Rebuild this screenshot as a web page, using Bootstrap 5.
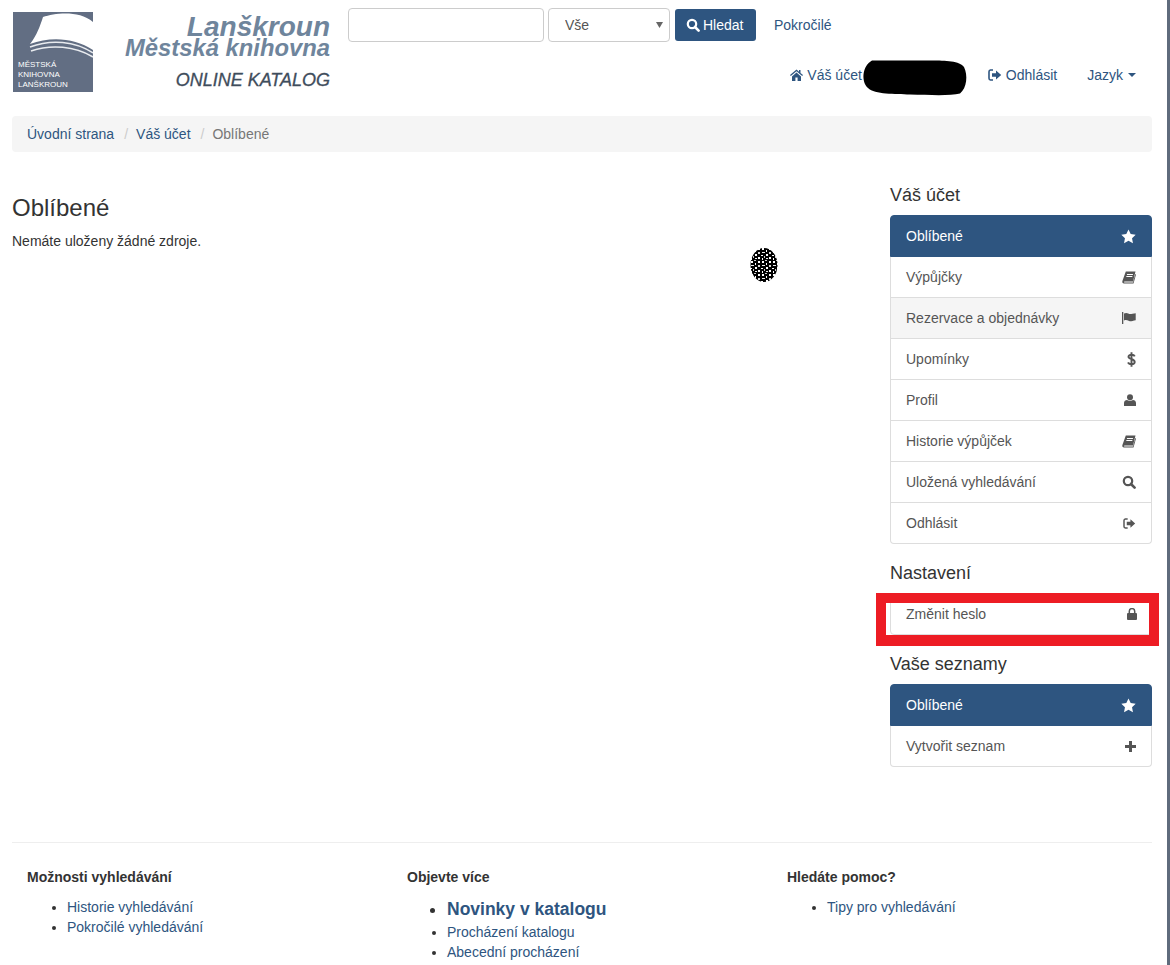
<!DOCTYPE html>
<html lang="cs">
<head>
<meta charset="utf-8">
<title>Oblíbené</title>
<link href="https://cdn.jsdelivr.net/npm/bootstrap@5.3.0/dist/css/bootstrap.min.css" rel="stylesheet">
<style>
html,body{height:965px;overflow:hidden}
body{position:relative;font:14px/20px "Liberation Sans",Arial,sans-serif;color:#333;background:#fff;border-right:3px solid #5f6b7c;width:1170px}
a{color:#2e5580;text-decoration:none}
.page-shell{padding:0 15px 0 12px;width:1167px}
.top-head{height:116px}
.logo-box{width:80px;height:80px;margin:12px 0 0 1px;flex:none}
.brand-box{width:237px;text-align:right;font-style:italic;font-weight:700;color:#6f859c;margin-top:15px}
.brand-a{font-size:28px;line-height:24px}
.brand-b{font-size:23.8px;line-height:18px}
.brand-c{font-size:18px;line-height:20px;color:#3f4d5c;margin-top:13px;font-weight:400;-webkit-text-stroke:.3px #3f4d5c}
.head-right{margin-left:18px;width:804px}
.search-row{margin-top:8px;height:34px}
.q-input{width:196px;height:34px;border:1px solid #ccc;border-radius:4px;margin-right:4px;padding:6px 12px;background:#fff}
.q-select.form-select{width:122px;height:34px;border:1px solid #ccc;border-radius:4px;margin-right:5px;padding:0 12px 0 16px;font-size:14px;color:#555;background-color:#fff;background-image:url("data:image/svg+xml,%3Csvg xmlns='http://www.w3.org/2000/svg' viewBox='0 0 7 6'%3E%3Cpath d='M0 0h7L3.500 6z' fill='%23666'/%3E%3C/svg%3E");background-position:right 6px center;background-size:7px 6px;font-family:inherit;line-height:32px}
.q-btn{height:32px;width:81px;padding:0 0 0 11px;background:#2e5580;border:0;border-radius:3px;color:#fff;font-size:14px;line-height:32px;display:flex;align-items:center;gap:3px}
.q-btn:hover{background:#2e5580;color:#fff}
.adv-link{margin-left:18px}
.user-row{margin-top:23px;height:20px;padding-right:16px;gap:0}
.user-row a{display:flex;align-items:center;gap:4px}
.user-gap{width:126px}
.lang-gap{margin-left:30px}
.caret-mark{display:inline-block;border-top:4px solid #2e5580;border-left:4.500px solid transparent;border-right:4.500px solid transparent;margin-left:1px}
.crumbs{background:#f5f5f5;border-radius:4px;height:36px;padding:8px 15px;margin:0}
.crumbs .breadcrumb-item{font-size:14px;line-height:20px}
.crumbs .breadcrumb-item+.breadcrumb-item{padding-left:6px}
.crumbs .breadcrumb-item+.breadcrumb-item::before{color:#ccc;padding-right:8px;content:"/";float:none;padding-left:4px}
.crumbs .breadcrumb-item.active{color:#777}
.main-row{height:691px}
.main-col{width:878px;padding-top:42px}
.main-title{font-size:24px;line-height:28px;font-weight:400;color:#333;margin:0 0 9px}
.side-col{width:262px;padding-top:33px}
.side-title{font-size:18px;line-height:20px;font-weight:400;color:#333;margin:0 0 10px}
.side-list{margin-bottom:19px;border-radius:4px}
.side-list .list-group-item{display:flex;justify-content:space-between;align-items:center;padding:10px 15px;height:41px;border-color:#ddd;color:#555;font-size:14px;line-height:20px}
.side-list .list-group-item:first-child{height:42px}
.side-list .list-group-item.active{background:#2e5580;border-color:#2e5580;color:#fff;font-weight:400}
.side-list .list-group-item.hl-row{background:#f5f5f5}
.side-list .list-group-item+.list-group-item{margin-top:0;border-top-width:0}
.ico-lock{margin-right:-1px}
.foot-zone{border-top:1px solid #eee;margin-top:-1px;padding-top:24px}
.foot-cell{width:380px;padding:0 15px}
.foot-title{font-size:14px;line-height:20px;font-weight:700;margin:0 0 10px;color:#333}
.foot-list{padding-left:40px;margin:0;list-style:disc}
.foot-big{font-size:17.500px;font-weight:700;line-height:25px}
.red-frame{position:absolute;left:876px;top:593px;width:283px;height:53px;border:solid #ed1c24;border-width:10px 10px 11px 10px;pointer-events:none}
.ink-blob{position:absolute;left:860px;top:58px}
.dot-blob{position:absolute;left:750px;top:247px}
.edge-nick{position:absolute;left:1167px;top:607px;width:1px;height:89px;background:#fff}
.ico{flex:none;display:block}
</style>
</head>
<body>
<div class="page-shell">
  <header class="top-head d-flex">
    <svg class="logo-box" viewBox="0 0 80 80" aria-label="Městská knihovna Lanškroun">
      <rect width="80" height="80" fill="#626e83"/>
      <path d="M30 5C42 1 66-2 80 10V38C62 26 38 24 17 32C24 23 27 14 30 5Z" fill="#fff"/>
      <path d="M17 35C38 27 62 29 80 41M18 39C38 32 62 34 80 45" fill="none" stroke="#e8ebef" stroke-width="1.500"/>
      <text x="5" y="55" font-size="8" fill="#fff" font-family="Liberation Sans">MĚSTSKÁ</text>
      <text x="5" y="65" font-size="8" fill="#fff" font-family="Liberation Sans">KNIHOVNA</text>
      <text x="5" y="75" font-size="8" fill="#fff" font-family="Liberation Sans">LANŠKROUN</text>
    </svg>
    <div class="brand-box">
      <div class="brand-a">Lanškroun</div>
      <div class="brand-b">Městská knihovna</div>
      <div class="brand-c">ONLINE KATALOG</div>
    </div>
    <div class="head-right">
      <form class="search-row d-flex align-items-center">
        <input class="q-input" type="text" aria-label="Hledat">
        <select class="q-select form-select" aria-label="Typ"><option>Vše</option></select>
        <button class="q-btn btn" type="button">
          <svg class="ico" width="14" height="14" viewBox="0 0 14 14"><circle cx="6" cy="6" r="4.200" fill="none" stroke="#fff" stroke-width="2.200"/><path d="M9 9l3.600 3.600" stroke="#fff" stroke-width="2.600" stroke-linecap="round"/></svg>
          Hledat
        </button>
        <a class="adv-link" href="#">Pokročilé</a>
      </form>
      <nav class="user-row d-flex justify-content-end align-items-center">
        <a href="#"><svg class="ico" width="13" height="12" viewBox="0 0 13 12"><path d="M6.500 0.500L0 6l.8 1L6.500 2.300 12.200 7l.8-1L10.500 4V1H9v1.700zM2 7.500V12h3.400V8.500h2.200V12H11V7.500L6.500 3.600z" fill="#2e5580"/></svg>Váš účet</a>
        <span class="user-gap"></span>
        <a href="#"><svg class="ico" width="14" height="12" viewBox="0 0 14 12"><path d="M5 1H2.500A1.700 1.700 0 0 0 1 2.700v6.600A1.700 1.700 0 0 0 2.500 11H5" fill="none" stroke="#2e5580" stroke-width="1.600"/><path d="M4 4.200h4V1.400L13.200 6 8 10.600V7.800H4z" fill="#2e5580"/></svg>Odhlásit</a>
        <a class="lang-gap" href="#">Jazyk <span class="caret-mark"></span></a>
      </nav>
    </div>
  </header>

  <nav aria-label="breadcrumb">
    <ol class="breadcrumb crumbs">
      <li class="breadcrumb-item"><a href="#">Úvodní strana</a></li>
      <li class="breadcrumb-item"><a href="#">Váš účet</a></li>
      <li class="breadcrumb-item active" aria-current="page">Oblíbené</li>
    </ol>
  </nav>

  <div class="main-row d-flex">
    <main class="main-col">
      <h2 class="main-title">Oblíbené</h2>
      <p class="m-0">Nemáte uloženy žádné zdroje.</p>
    </main>
    <aside class="side-col">
      <h4 class="side-title">Váš účet</h4>
      <div class="list-group side-list">
        <a class="list-group-item active" href="#">Oblíbené <svg class="ico" width="15" height="15" viewBox="0 0 14 14"><path d="M7 .4l2.050 4.300 4.650.6-3.400 3.250.87 4.650L7 10.950l-4.170 2.250.87-4.650L.3 5.300l4.650-.6z" fill="#fff"/></svg></a>
        <a class="list-group-item" href="#">Výpůjčky <svg class="ico" width="14" height="13" viewBox="0 0 14 13"><path d="M3.800 .5H13.500L11 10.500H2.800C1.600 10.500 1.500 11.500 2.600 11.500H11l2.300-8.500.7.500L11.500 12.500H2C.6 12.500 0 11.300.4 10zM5.100 3l-.3 1h6l.3-1zM4.500 5l-.3 1h6l.3-1z" fill="#555" fill-rule="evenodd"/></svg></a>
        <a class="list-group-item hl-row" href="#">Rezervace a objednávky <svg class="ico" width="14" height="12" viewBox="0 0 14 12"><rect width="1.300" height="12" fill="#555"/><path d="M2 1.500c3-1.600 4.500.6 6 .6s3.500-.6 5.700-.9v7c-2.500.5-3.800 1-5.700 1s-3-2-6-.6z" fill="#555"/></svg></a>
        <a class="list-group-item" href="#">Upomínky <svg class="ico" width="9" height="15" viewBox="0 0 8 14"><path d="M7 4C6.600 3 5.500 2.600 4 2.600 2.400 2.600 1.200 3.200 1.200 4.400c0 2.800 5.800 1.400 5.800 5 0 1.300-1.300 2-3 2-1.600 0-2.800-.6-3.200-1.700M4 .3v13.400" fill="none" stroke="#555" stroke-width="1.800"/></svg></a>
        <a class="list-group-item" href="#">Profil <svg class="ico" width="12" height="12" viewBox="0 0 12 12"><circle cx="6" cy="3.200" r="3" fill="#555"/><path d="M0 12V9c0-2 1.500-3 3-3 1 1 5 1 6 0 1.500 0 3 1 3 3v3z" fill="#555"/></svg></a>
        <a class="list-group-item" href="#">Historie výpůjček <svg class="ico" width="14" height="13" viewBox="0 0 14 13"><path d="M3.800 .5H13.500L11 10.500H2.800C1.600 10.500 1.500 11.500 2.600 11.500H11l2.300-8.500.7.500L11.500 12.500H2C.6 12.500 0 11.300.4 10zM5.100 3l-.3 1h6l.3-1zM4.500 5l-.3 1h6l.3-1z" fill="#555" fill-rule="evenodd"/></svg></a>
        <a class="list-group-item" href="#">Uložená vyhledávání <svg class="ico" width="14" height="14" viewBox="0 0 14 14"><circle cx="6" cy="6" r="4.200" fill="none" stroke="#555" stroke-width="2.200"/><path d="M9 9l3.600 3.600" stroke="#555" stroke-width="2.600" stroke-linecap="round"/></svg></a>
        <a class="list-group-item" href="#">Odhlásit <svg class="ico" width="13" height="11" viewBox="0 0 14 12"><path d="M5 1H2.500A1.700 1.700 0 0 0 1 2.700v6.600A1.700 1.700 0 0 0 2.500 11H5" fill="none" stroke="#555" stroke-width="1.600"/><path d="M4 4.200h4V1.400L13.200 6 8 10.600V7.800H4z" fill="#555"/></svg></a>
      </div>
      <h4 class="side-title">Nastavení</h4>
      <div class="list-group side-list">
        <a class="list-group-item" href="#">Změnit heslo <svg class="ico ico-lock" width="10" height="12" viewBox="0 0 10 12"><rect y="5" width="10" height="7" rx="1" fill="#555"/><path d="M2.300 5.500V3.300a2.700 2.700 0 0 1 5.400 0v2.200" fill="none" stroke="#555" stroke-width="1.500"/></svg></a>
      </div>
      <h4 class="side-title">Vaše seznamy</h4>
      <div class="list-group side-list">
        <a class="list-group-item active" href="#">Oblíbené <svg class="ico" width="15" height="15" viewBox="0 0 14 14"><path d="M7 .4l2.050 4.300 4.650.6-3.400 3.250.87 4.650L7 10.950l-4.170 2.250.87-4.650L.3 5.300l4.650-.6z" fill="#fff"/></svg></a>
        <a class="list-group-item" href="#">Vytvořit seznam <svg class="ico" width="11" height="11" viewBox="0 0 11 11"><path d="M4 0h3v4h4v3H7v4H4V7H0V4h4z" fill="#555"/></svg></a>
      </div>
    </aside>
  </div>

  <footer class="foot-zone d-flex">
    <div class="foot-cell">
      <p class="foot-title">Možnosti vyhledávání</p>
      <ul class="foot-list">
        <li><a href="#">Historie vyhledávání</a></li>
        <li><a href="#">Pokročilé vyhledávání</a></li>
      </ul>
    </div>
    <div class="foot-cell">
      <p class="foot-title">Objevte více</p>
      <ul class="foot-list">
        <li class="foot-big"><a href="#">Novinky v katalogu</a></li>
        <li><a href="#">Procházení katalogu</a></li>
        <li><a href="#">Abecední procházení</a></li>
      </ul>
    </div>
    <div class="foot-cell">
      <p class="foot-title">Hledáte pomoc?</p>
      <ul class="foot-list">
        <li><a href="#">Tipy pro vyhledávání</a></li>
      </ul>
    </div>
  </footer>
</div>

<svg class="ink-blob" width="110" height="40" viewBox="0 0 110 40" aria-hidden="true">
  <path d="M12 2.500H72C85 2.500 100 3 104 9C108 17 107 30 100 35.500C90 38 70 37 50 36.500C35 36 15 36.500 8 30C1 24 2 8 12 2.500Z" fill="#000"/>
</svg>
<svg class="dot-blob" width="28" height="36" viewBox="0 0 28 36" aria-hidden="true">
  <defs>
    <pattern id="speck" width="11" height="13" patternUnits="userSpaceOnUse">
      <rect width="11" height="13" fill="#000"/>
      <rect x="1" y="1" width="2" height="2" fill="#fff"/>
      <rect x="4" y="0" width="2" height="1" fill="#ccc"/>
      <rect x="8" y="1" width="2" height="2" fill="#fff"/>
      <rect x="5" y="3" width="1" height="2" fill="#fff"/>
      <rect x="1" y="5" width="3" height="1" fill="#eee"/>
      <rect x="8" y="5" width="2" height="2" fill="#ddd"/>
      <rect x="0" y="8" width="2" height="1" fill="#fff"/>
      <rect x="5" y="7" width="2" height="2" fill="#fff"/>
      <rect x="3" y="9" width="1" height="2" fill="#ccc"/>
      <rect x="8" y="10" width="2" height="2" fill="#fff"/>
      <rect x="5" y="11" width="2" height="1" fill="#eee"/>
      <rect x="1" y="11" width="1" height="2" fill="#fff"/>
    </pattern>
  </defs>
  <ellipse cx="14" cy="18" rx="13.500" ry="17" fill="url(#speck)"/>
</svg>
<div class="red-frame"></div>
<div class="edge-nick"></div>
<script src="https://cdn.jsdelivr.net/npm/bootstrap@5.3.0/dist/js/bootstrap.bundle.min.js"></script>
</body>
</html>
